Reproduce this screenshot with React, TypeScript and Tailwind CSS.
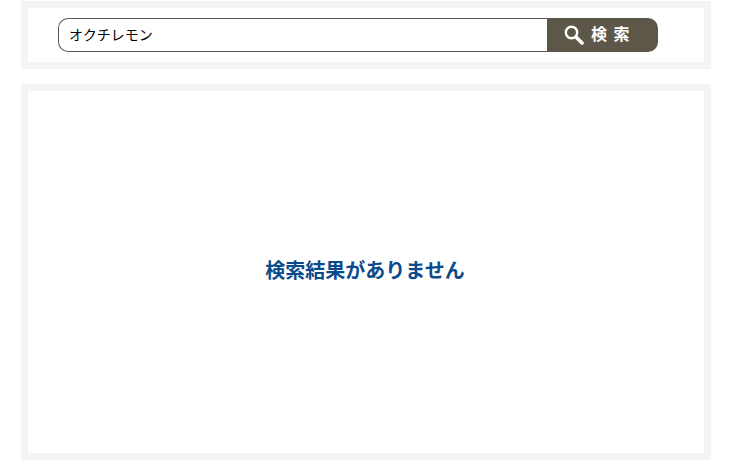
export default function App() {
  return (
    <div className="w-[736px] h-[472px] bg-white pt-px pl-[21px] overflow-hidden" style={{ fontFamily: '"Liberation Sans", "Noto Sans CJK JP", sans-serif' }}>
      <div className="w-[690px] flex flex-col gap-[15px]">
        <div className="h-[68px] border-[7px] border-[#f4f4f3] pt-[10px] pl-[30px]">
          <div className="flex w-[600px] h-[34px]">
            <div className="w-[489px] h-[34px] border border-r-0 border-[#5c5748] rounded-l-[10px] flex items-center pl-[10px] text-[14px] text-black bg-white">
              オクチレモン
            </div>
            <button className="w-[111px] h-[34px] bg-[#5c5748] rounded-r-[10px] flex items-center text-white font-bold text-[16px] pl-[17px]">
              <svg width="20" height="20" viewBox="0 0 20 20" fill="none" stroke="white">
                <circle cx="7.5" cy="7.5" r="5.7" strokeWidth="2.4" />
                <path d="M12 12 L18 18" strokeWidth="3.6" strokeLinecap="round" />
              </svg>
              <span className="ml-[7px] tracking-[6.5px]">検索</span>
            </button>
          </div>
        </div>
        <div className="h-[376px] border-[7px] border-[#f4f4f3] flex items-center justify-center">
          <p className="text-[20px] font-bold text-[#0b4a8b] pb-[3px] pr-[2px]">検索結果がありません</p>
        </div>
      </div>
    </div>
  );
}
